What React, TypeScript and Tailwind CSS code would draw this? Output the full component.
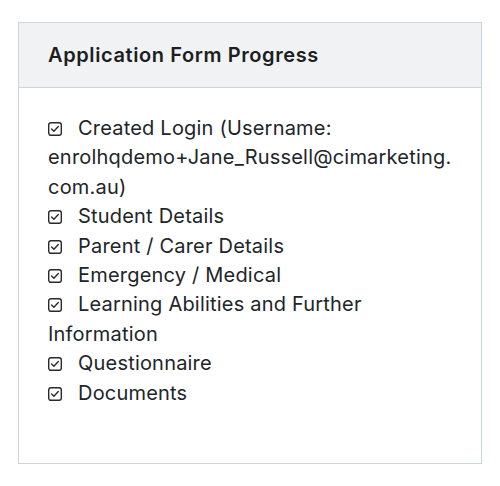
import React from "react";

const Check = () => (
  <svg width="15" height="15" viewBox="0 0 14 14" fill="none" stroke="#2a2a2a" className="inline-block align-[-1px] mr-[16px]" style={{ width: 14, height: 14 }}>
    <rect x="0.7" y="0.7" width="12.6" height="12.6" rx="2.2" strokeWidth="1.4" />
    <path d="M3.6 7.1 L5.9 9.3 L10.3 4.6" strokeWidth="1.4" strokeLinecap="round" strokeLinejoin="round" />
  </svg>
);

const items: React.ReactNode[] = [
  <>Created Login (Username: enrolhqdemo+Jane_Russell@cimarketing.<wbr />com.au)</>,
  "Student Details",
  "Parent / Carer Details",
  "Emergency / Medical",
  "Learning Abilities and Further Information",
  "Questionnaire",
  "Documents",
];

export default function App() {
  return (
    <div className="w-[500px] h-[486px] bg-white pt-[22px] px-[18px]" style={{ fontFamily: "Inter, 'Noto Sans', sans-serif" }}>
      <div className="border border-[#cdd5dc] h-[442px] flex flex-col">
        <div className="bg-[#f1f2f4] border-b border-[#cdd5dc] h-[65px] flex items-center px-[29px]">
          <h2 className="text-[20px] font-semibold tracking-[0.6px] text-[#1c1e21]">Application Form Progress</h2>
        </div>
        <div className="px-[29px] pt-[26px] text-[20px] tracking-[0.2px] leading-[29.4px] text-[#212529] break-words">
          {items.map((t, i) => (
            <div key={i}>
              <Check />
              {t}
            </div>
          ))}
        </div>
      </div>
    </div>
  );
}
